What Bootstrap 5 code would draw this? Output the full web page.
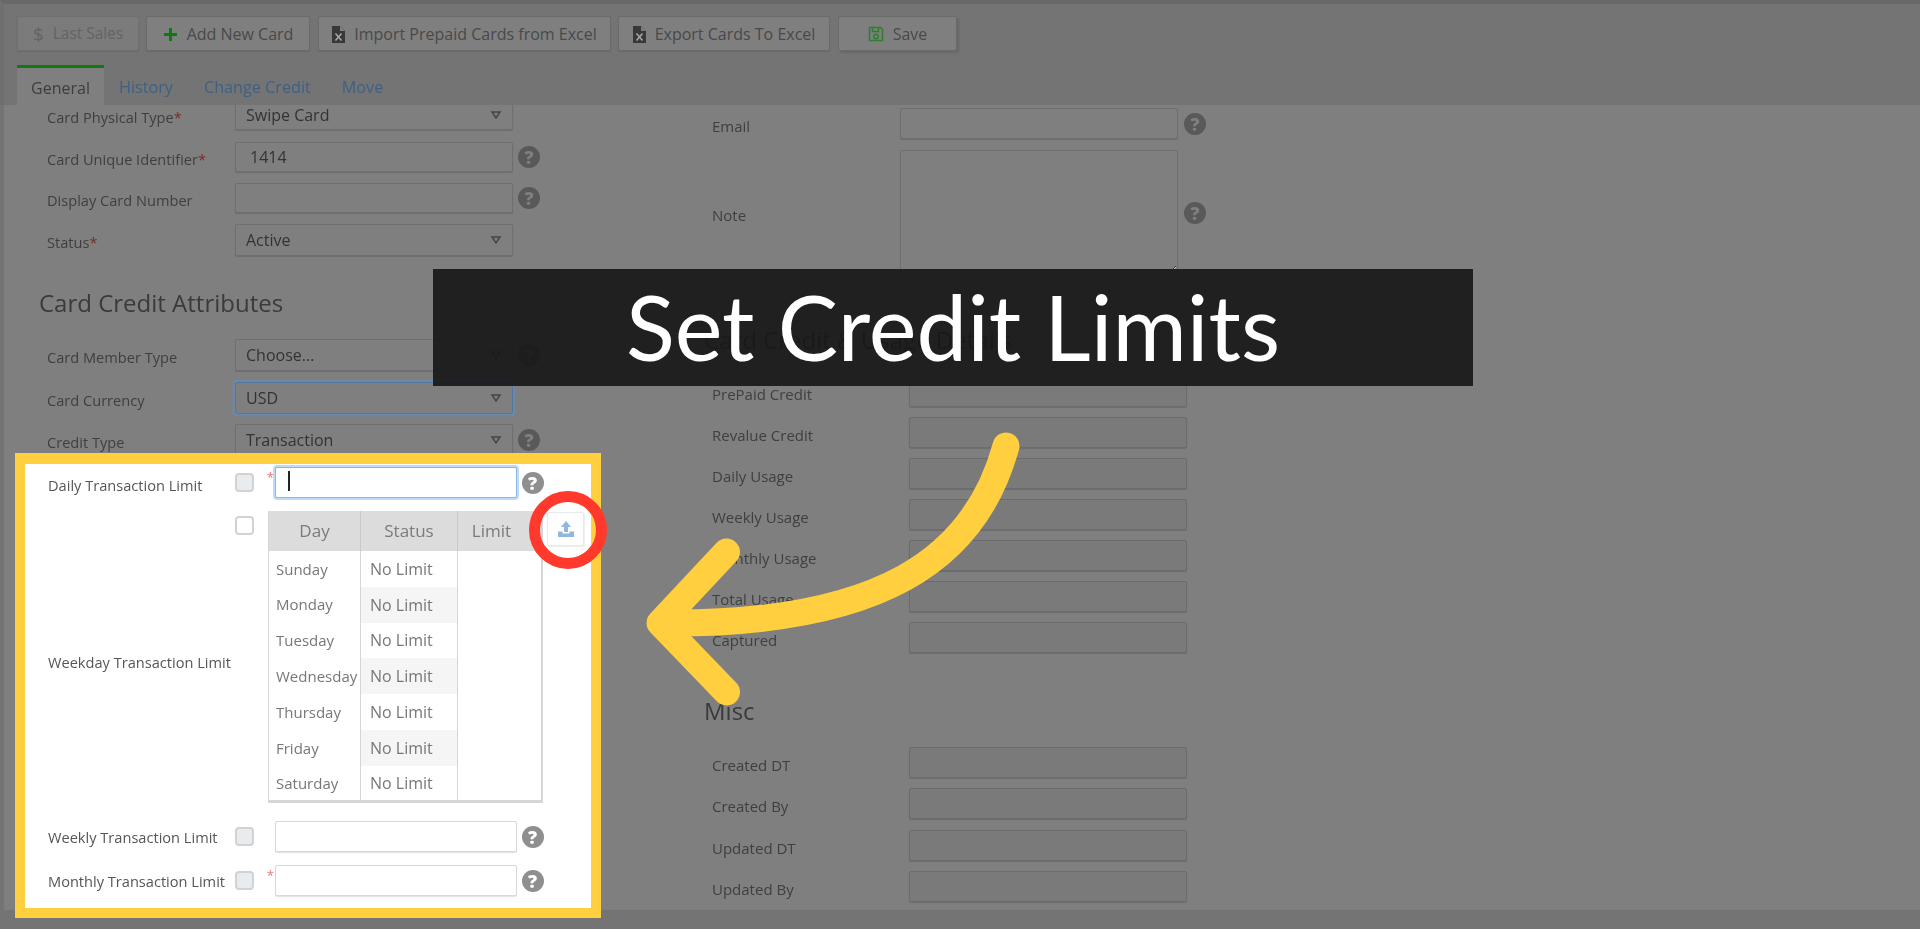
<!DOCTYPE html>
<html lang="en">
<head>
<meta charset="utf-8">
<title>Set Credit Limits</title>
<link href="https://cdn.jsdelivr.net/npm/bootstrap@5.3.0/dist/css/bootstrap.min.css" rel="stylesheet">
<style>
html,body{height:929px;overflow:hidden}
body{background:#7f7f7f;font-family:"Open Sans","Liberation Sans",sans-serif;font-size:14.6px;color:#3f3f3f;position:relative}
.pagew{filter:blur(.5px);height:929px}
.topband{background:#747474;height:105px;border-top:4px solid #686868;border-left:4px solid #6f6f6f}
.tbar{padding:12px 0 0 13px;gap:7px;height:47px}
.tbtn{--bs-btn-padding-y:0;height:35px;font-size:16px;background:#7f7f7f;border:1px solid #6b6b6b;color:#494949;border-radius:2px;display:inline-flex;align-items:center;justify-content:center;gap:9px;padding:1px 0 0;box-shadow:0 1px 1px #6a6a6a;white-space:nowrap}
.tbtn.dim{color:#636363;border-color:#707070;background:#7b7b7b;width:122px;font-size:15.4px}
.dollar{font-size:19px;line-height:1}
.tbtn.w1{width:164px}.tbtn.w2{width:293px;margin-left:1px}.tbtn.w3{width:212px}.tbtn.w4{width:119px;margin-left:1px;box-shadow:2px 2px 2px #686868}
.tabset{margin:14px 0 0 13px;border:0;height:40px;align-items:stretch}
.tabset .nav-link{border:0;border-radius:0;padding:0;margin:0;background:none;color:#3f6083;font-size:16.2px;line-height:44px}
.tabset .nav-link.active{width:87px;background:#7f7f7f;color:#3d3d3d;text-align:center;border-top:3px solid #0f7a0f;line-height:41px;height:40px;margin-right:15px;font-size:16px}
.tabset .nav-link.t2{margin-right:31px}
.cols{height:824px;overflow:hidden;border-left:4px solid #747474}
.lcol{width:636px;flex:none}
.rcol{flex:1}
.frow{display:flex;align-items:center;gap:0}
.flabel{flex:none;position:relative;top:3px;white-space:nowrap;color:#3f3f3f;font-size:14.6px}
.lcol>.frow{padding-left:43px}
.lcol .flabel{width:188px}
.req{color:#7c2a2a}
.form-control.fld,.form-select.fld{background-color:#7f7f7f;border:1px solid #6f6f6f;border-radius:2px;color:#333;font-size:16px;box-shadow:0 1px 1px #6d6d6d;padding:0 10px;flex:none;min-height:0}
.form-select.fld{background-size:14px 10px;background-position:right 9px center;background-image:url("data:image/svg+xml,%3Csvg xmlns='http://www.w3.org/2000/svg' viewBox='0 0 14 10'%3E%3Cpath d='M3 2h8L7 8z' fill='none' stroke='%23444' stroke-width='1.5'/%3E%3C/svg%3E")}
.w278{width:278px}.w279{width:278.5px}
.h30{height:30px}.h31{height:31px}.h32{height:32px}
.form-select.fld.foc{border-color:#55779f;box-shadow:0 0 2px 2px #6c8bb0}
.hint{flex:none;width:22px;height:22px;border-radius:50%;background:#595959;color:#7f7f7f;font:800 18px/22px "Open Sans",sans-serif;text-align:center;margin-left:5px}
.sect{font-size:24px;font-weight:400;color:#3a3a3a;line-height:30px;margin:0;white-space:nowrap}
.m12{margin-top:12px}.m11{margin-top:11px}.m10{margin-top:10px}
.hpanel{margin:-3px 0 0 11px;width:586px;height:465px;border:solid #ffcf3f;border-width:11px 10px 10px;background:#fff;padding:3px 0 0 23px;position:relative;overflow:hidden;color:#5a5a5a}
.hpanel .flabel{color:#565656;width:187px;font-size:14.6px}
.hpanel .frow{align-items:flex-start}
.tick{flex:none;width:19px;height:19px;margin-top:6px;background:#e9ecef;border:2px solid #d2d2d2;border-radius:4px;display:block}
.tick.on{background:#fff}
.star{flex:none;width:21px;color:#ef7272;text-align:right;padding-right:1px;font-size:13px;line-height:20px}
.hpanel .form-control{flex:none;width:241.5px;height:31px;border:1px solid #d8d8d8;border-radius:2px;padding:0;box-shadow:0 1px 1px #e2e2e2}
.hpanel .form-control.act{border-color:#8cb6e4;box-shadow:0 0 0 2px #bcdcfa;position:relative}
.caret-bar{position:absolute;left:263px;top:7px;width:1.5px;height:20px;background:#222}
.hpanel .hint{background:#8f8f8f;color:#fff;margin-top:5px}
.limits{flex:none;width:275px;margin:-2px 0 0 14px;height:292px;border-collapse:collapse;border:solid #d6d6d6;border-width:0 2px 3px 1px;table-layout:fixed;font-size:15px;color:#777}
.limits th{background:#dcdcdc;color:#7b7b7b;font-size:17px;font-weight:400;text-align:center;height:40px;padding:0;border-right:1px solid #c9c9c9}
.limits th:last-child{border-right:0;padding-right:16px}
.limits td{padding:0 0 0 7px;height:35.4px;border-right:1px solid #d6d6d6;white-space:nowrap;background:#fff;overflow:visible}
.limits td+td{padding-left:9px;font-size:16px}
.limits td:last-child{border-right:0}
.limits tr.zeb td:nth-child(2){background:#f5f5f5}
.upbtn{flex:none;width:37px;height:34px;margin:-1px 0 0 4px;background:#fff;border:1px solid #e9e9e9;border-radius:2px;padding:0;display:flex;align-items:center;justify-content:center;box-shadow:1px 1px 1px #eee}
.cutline{margin:12px 0 0 227px;width:241px;height:2px;background:#eee}
.rcol{padding-left:64px}
.rcol .frow{padding-left:8px}
.rcol .flabel{width:188px;font-size:15px}
.rcol .wide .flabel{width:196.5px}
.ro{background-color:#7a7a7a!important;border-color:#6c6c6c!important}
.txta{height:125px;resize:vertical}
.annot{position:absolute;left:0;top:0;pointer-events:none}
.banner{position:absolute;left:433px;top:269px;width:1040px;height:117px;background:rgba(22,22,22,.9);color:#fff;font:400 90.4px/115px "Lato",sans-serif;text-align:center;white-space:nowrap}
.bottomband{position:absolute;left:0;right:0;top:910px;height:19px;background:#747474;z-index:-1}
</style>
</head>
<body>
<div class="pagew">
<div class="topband">
  <div class="d-flex tbar">
    <button class="btn tbtn dim" type="button"><span class="dollar">$</span>Last Sales</button>
    <button class="btn tbtn w1" type="button"><svg width="15" height="15" viewBox="0 0 16 16"><path d="M8 1v14M1 8h14" stroke="#0f7a0f" stroke-width="3.2"/></svg>Add New Card</button>
    <button class="btn tbtn w2" type="button"><svg width="13" height="17" viewBox="0 0 13 17"><path d="M0 0h8l5 5v12H0z" fill="#383838"/><path d="M8 0v5h5" fill="#7f7f7f"/><path d="M3.5 7.5l6 7M9.5 7.5l-6 7" stroke="#a8a8a8" stroke-width="1.5"/></svg>Import Prepaid Cards from Excel</button>
    <button class="btn tbtn w3" type="button"><svg width="13" height="17" viewBox="0 0 13 17"><path d="M0 0h8l5 5v12H0z" fill="#383838"/><path d="M8 0v5h5" fill="#7f7f7f"/><path d="M3.5 7.5l6 7M9.5 7.5l-6 7" stroke="#a8a8a8" stroke-width="1.5"/></svg>Export Cards To Excel</button>
    <button class="btn tbtn w4" type="button"><svg width="16" height="16" viewBox="0 0 16 16" fill="none" stroke="#2f7f2f" stroke-width="1.5"><path d="M1.5 1.5h11l2 2v11h-13z"/><path d="M4.5 1.5v4h6v-4"/><circle cx="8" cy="10.5" r="2.2"/></svg>Save</button>
  </div>
  <ul class="nav nav-tabs tabset">
    <li class="nav-item"><a class="nav-link active" href="#">General</a></li>
    <li class="nav-item"><a class="nav-link t2" href="#">History</a></li>
    <li class="nav-item"><a class="nav-link t2" href="#">Change Credit</a></li>
    <li class="nav-item"><a class="nav-link" href="#">Move</a></li>
  </ul>
</div>
<div class="d-flex cols">
  <div class="lcol">
    <div class="frow" style="margin-top:-5px"><label class="flabel">Card Physical Type<span class="req">*</span></label><select class="form-select fld w278 h30"><option>Swipe Card</option></select></div>
    <div class="frow m12"><label class="flabel">Card Unique Identifier<span class="req">*</span></label><input class="form-control fld w278 h30" value="1414" style="padding-left:14px"><span class="hint">?</span></div>
    <div class="frow m11"><label class="flabel">Display Card Number</label><input class="form-control fld w278 h30"><span class="hint">?</span></div>
    <div class="frow m11"><label class="flabel">Status<span class="req">*</span></label><select class="form-select fld w278 h32"><option>Active</option></select></div>
    <div style="padding:32px 0 21px 35px"><h3 class="sect">Card Credit Attributes</h3></div>
    <div class="frow"><label class="flabel">Card Member Type</label><select class="form-select fld w278 h32"><option>Choose...</option></select><span class="hint">?</span></div>
    <div class="frow m11"><label class="flabel">Card Currency</label><select class="form-select fld foc w278 h32"><option>USD</option></select></div>
    <div class="frow m10"><label class="flabel">Credit Type</label><select class="form-select fld w278 h32"><option>Transaction</option></select><span class="hint">?</span></div>
    <div class="hpanel">
      <div class="frow" style="height:31px">
        <label class="flabel" style="top:8px">Daily Transaction Limit</label><span class="tick"></span><span class="star">*</span><input class="form-control act"><span class="caret-bar"></span><span class="hint">?</span>
      </div>
      <div class="frow" style="margin-top:15px;height:291px">
        <label class="flabel" style="top:139px">Weekday Transaction Limit</label><span class="tick on" style="margin-top:3px"></span>
        <table class="limits">
          <colgroup><col style="width:92px"><col style="width:97px"><col></colgroup>
          <thead><tr><th>Day</th><th>Status</th><th>Limit</th></tr></thead>
          <tbody>
            <tr><td>Sunday</td><td>No Limit</td><td></td></tr>
            <tr class="zeb"><td>Monday</td><td>No Limit</td><td></td></tr>
            <tr><td>Tuesday</td><td>No Limit</td><td></td></tr>
            <tr class="zeb"><td>Wednesday</td><td>No Limit</td><td></td></tr>
            <tr><td>Thursday</td><td>No Limit</td><td></td></tr>
            <tr class="zeb"><td>Friday</td><td>No Limit</td><td></td></tr>
            <tr><td>Saturday</td><td>No Limit</td><td></td></tr>
          </tbody>
        </table>
        <button class="upbtn" type="button" aria-label="Upload"><svg width="18" height="18" viewBox="0 0 18 18" fill="#8fb8dc"><path d="M9 1l5 6h-3v5H7V7H4z"/><path d="M1 11.5h4.5v2h7v-2H17V17H1z"/></svg></button>
      </div>
      <div class="frow" style="margin-top:17px;height:31px"><label class="flabel" style="top:6px">Weekly Transaction Limit</label><span class="tick"></span><span class="star"></span><input class="form-control"><span class="hint">?</span></div>
      <div class="frow" style="margin-top:13px;height:31px"><label class="flabel" style="top:6px">Monthly Transaction Limit</label><span class="tick"></span><span class="star">*</span><input class="form-control"><span class="hint">?</span></div>
      <div class="cutline"></div>
    </div>
  </div>
  <div class="rcol">
    <div class="frow" style="margin-top:3px"><label class="flabel">Email</label><input class="form-control fld w278 h31"><span class="hint" style="margin-left:6px">?</span></div>
    <div class="frow m11"><label class="flabel">Note</label><textarea class="form-control fld w278 txta"></textarea><span class="hint" style="margin-left:6px">?</span></div>
    <div style="padding:50px 0 21px"><h3 class="sect">Card Credit &amp; Usage Details</h3></div>
    <div class="frow wide"><label class="flabel">PrePaid Credit</label><input class="form-control fld ro w279 h31"></div>
    <div class="frow wide m10"><label class="flabel">Revalue Credit</label><input class="form-control fld ro w279 h31"></div>
    <div class="frow wide m10"><label class="flabel">Daily Usage</label><input class="form-control fld ro w279 h31"></div>
    <div class="frow wide m10"><label class="flabel">Weekly Usage</label><input class="form-control fld ro w279 h31"></div>
    <div class="frow wide m10"><label class="flabel">Monthly Usage</label><input class="form-control fld ro w279 h31"></div>
    <div class="frow wide m10"><label class="flabel">Total Usage</label><input class="form-control fld ro w279 h31"></div>
    <div class="frow wide m10"><label class="flabel">Captured</label><input class="form-control fld ro w279 h31"></div>
    <div style="padding:43px 0 21px"><h3 class="sect">Misc</h3></div>
    <div class="frow wide"><label class="flabel">Created DT</label><input class="form-control fld ro w279 h31"></div>
    <div class="frow wide m10"><label class="flabel">Created By</label><input class="form-control fld ro w279 h31"></div>
    <div class="frow wide m11"><label class="flabel">Updated DT</label><input class="form-control fld ro w279 h31"></div>
    <div class="frow wide m10"><label class="flabel">Updated By</label><input class="form-control fld ro w279 h31"></div>
  </div>
</div>
<div class="bottomband"></div>
</div>
<div class="banner">Set Credit Limits</div>
<svg class="annot" width="1920" height="929" viewBox="0 0 1920 929" fill="none">
  <circle cx="568" cy="530" r="33.5" stroke="#ff3a2d" stroke-width="11"/>
  <g stroke="#ffcf3f" stroke-width="27" stroke-linecap="round" stroke-linejoin="round">
    <path d="M1006 446C975 560 880 625 662 623"/>
    <path d="M726.5 552L660 623L726.5 692"/>
  </g>
</svg>
</body>
</html>
